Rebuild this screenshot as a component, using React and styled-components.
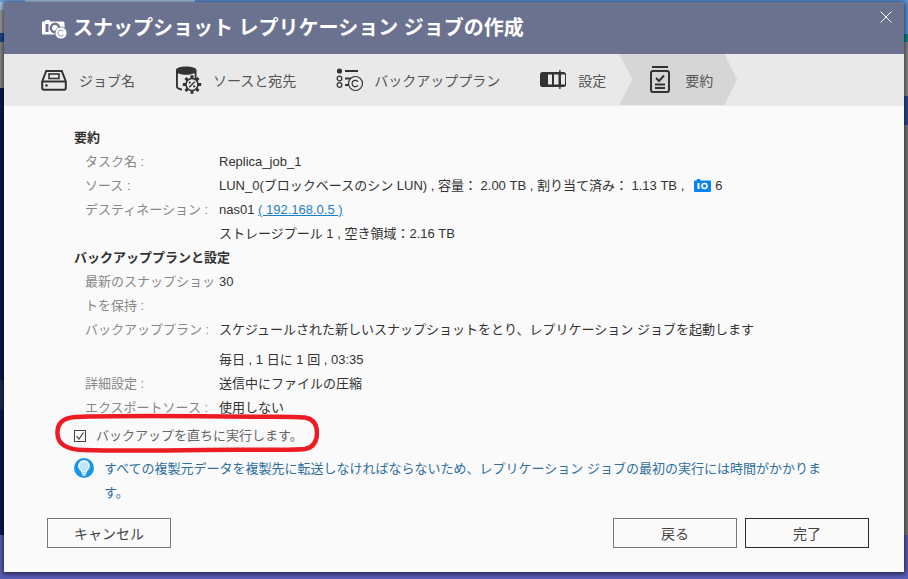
import React from "react";
import styled, { createGlobalStyle } from "styled-components";

const Global = createGlobalStyle`
  html, body { margin: 0; padding: 0; background: #5a5fb8; }
  body { font-family: "Liberation Sans", "Noto Sans CJK JP", sans-serif; }
  * { box-sizing: border-box; }
`;

const Desktop = styled.div`
  width: 908px;
  height: 579px;
  padding: 2px 4px 7px;
  overflow: hidden;
  background:
    linear-gradient(to right, #6fa0e0 0 25px, #aac6ee 25px 195px, #5b94dd 195px) 0 0 / 100% 2px no-repeat,
    linear-gradient(to bottom, #a9c4e8 0 10px, #9a9a9a 10px 33px, #1a4a90 33px 42px, #8a8a8a 42px 88px, #0a1a50 88px 380px, #1c2a50 380px 410px, #0a1a50 410px 535px, #5a5fb8 535px) 0 0 / 4px 100% no-repeat,
    linear-gradient(to bottom, #5b94dd 0 34px, #0a8a8a 34px 42px, #8a8a8a 42px 96px, #2a4a90 96px 125px, #7a7a7a 125px 535px, #5a5fb8 535px) 100% 0 / 4px 100% no-repeat,
    #5a5fb8;
`;

const Dialog = styled.div`
  width: 900px;
  height: 570px;
  display: flex;
  flex-direction: column;
  background: #fafafa;
  box-shadow: 0 1px 5px 1px rgba(0, 0, 0, 0.65);
`;

const Header = styled.header`
  height: 52px;
  flex: none;
  display: flex;
  align-items: center;
  padding: 0 11px 0 37px;
  gap: 4px;
  background: #6b7290;
  color: #fff;
`;

const Title = styled.h1`
  margin: 0;
  font-size: 20px;
  font-weight: 700;
  line-height: 52px;
  white-space: nowrap;
`;

const Close = styled.button`
  margin-left: auto;
  align-self: flex-start;
  margin-top: 8px;
  padding: 0;
  width: 14px;
  height: 14px;
  display: flex;
  border: 0;
  background: none;
  color: #fff;
`;

const StepBar = styled.nav`
  height: 52px;
  flex: none;
  display: flex;
  align-items: center;
  padding-left: 37px;
  background: #e9e9e9;
`;

const Step = styled.div`
  display: flex;
  align-items: center;
  height: 51px;
  margin-bottom: 1px;
  margin-right: 40px;
  color: #555;
  font-size: 14px;
  white-space: nowrap;
`;

const ActiveStep = styled(Step)`
  margin-left: -27px;
  margin-right: 0;
  padding: 0 24px 0 31px;
  background: #d6d6d6;
  clip-path: polygon(0 0, 105px 0, 100% 50%, 105px 100%, 0 100%, 13px 50%);
`;

const StepIcon = styled.span`
  width: ${(p) => p.$w || 38}px;
  flex: none;
  display: flex;
  align-items: center;
`;

const Body = styled.main`
  flex: 1;
  padding: 20px 69px 0 70px;
  font-size: 13px;
  line-height: 24px;
  color: #333;
`;

const Heading = styled.h2`
  margin: 0;
  font-size: 13px;
  font-weight: 700;
  line-height: 24px;
  color: #333;
`;

const Row = styled.div`
  display: grid;
  grid-template-columns: 134px 1fr;
  padding-left: 11px;
  margin-top: ${(p) => p.$top || 0}px;
`;

const Label = styled.div`
  color: #888;
  padding-right: 3px;
`;

const Value = styled.div`
  color: #333;
  white-space: nowrap;
`;

const Link = styled.a`
  color: #1a7fc9;
  text-decoration: underline;
`;

const SnapBadge = styled.span`
  display: inline-flex;
  vertical-align: -2px;
  margin: 0 4px 0 10px;
`;

const CheckRow = styled.label`
  position: relative;
  display: flex;
  align-items: center;
  gap: 10px;
  height: 24px;
  margin-top: 4px;
  color: #666;
`;

const CheckBox = styled.span`
  width: 12px;
  height: 12px;
  flex: none;
  display: flex;
  border: 1px solid #444;
`;

const Annotation = styled.span`
  position: absolute;
  left: -19px;
  top: -11px;
  display: block;
  pointer-events: none;
`;

const Info = styled.div`
  display: flex;
  gap: 10px;
  margin-top: 9px;
  color: #2f6f9f;
`;

const InfoIcon = styled.span`
  flex: none;
  height: 20px;
  margin-top: 1px;
  display: flex;
`;

const Footer = styled.footer`
  flex: none;
  display: flex;
  gap: 8px;
  padding: 0 35px 24px 43px;
`;

const Button = styled.button`
  width: 124px;
  height: 30px;
  padding: 0;
  font: inherit;
  font-size: 14px;
  color: #444;
  background: #fafafa;
  border: 1px solid ${(p) => (p.$primary ? "#2b2b2b" : "#777")};
  border-radius: 0;
  margin-left: ${(p) => (p.$push ? "auto" : 0)};
`;

const dark = "#333";

const SnapshotIcon = () => (
  <svg width="28" height="22" viewBox="0 0 28 22">
    <path d="M1 5.500a1 1 0 0 1 1-1h2l.6-1.500h4l.6 1.500H22a1.500 1.500 0 0 1 1.500 1.500V16a1.500 1.500 0 0 1-1.500 1.500H2a1 1 0 0 1-1-1z" fill="#fff" />
    <rect x="4.500" y="7" width="3" height="8" fill="#6b7290" />
    <circle cx="14" cy="11" r="4.200" fill="none" stroke="#6b7290" strokeWidth="2.400" />
    <circle cx="20" cy="16" r="6" fill="#fff" stroke="#6b7290" strokeWidth="0.800" />
    <path d="M22.200 14.400a2.800 2.800 0 1 0 0 3.200" fill="none" stroke="#a9aec2" strokeWidth="1.200" />
  </svg>
);

const CloseIcon = () => (
  <svg width="14" height="14" viewBox="0 0 14 14">
    <path d="M1.500 1.500l11 11M12.500 1.500l-11 11" stroke="#fff" strokeWidth="1" fill="none" />
  </svg>
);

const DriveIcon = () => (
  <svg width="26" height="22" viewBox="0 0 26 22" fill="none" stroke={dark} strokeWidth="2">
    <path d="M1.200 12.500L5.200 2h15.600l4 10.500V19a1.700 1.700 0 0 1-1.700 1.700H2.900A1.700 1.700 0 0 1 1.200 19z" />
    <path d="M1.500 12.500h23" />
    <rect x="8" y="5" width="10" height="4.500" strokeWidth="1.600" />
    <circle cx="5.500" cy="16.500" r="1.300" fill={dark} stroke="none" />
  </svg>
);

const SourceIcon = () => (
  <svg width="27" height="28" viewBox="0 0 27 28" fill="none">
    <path d="M1 4c0-2 4.500-3.500 10-3.500S21.500 2 21.500 4v9h-1.800V7.300c-2 .9-5.200 1.500-8.700 1.500S4.500 8.200 2.900 7.300V21c.8.700 2.300 1.300 4.100 1.600v1.800C3.500 24 1 22.500 1 20.500z" fill={dark} />
    <g transform="translate(17 18.500)">
      <path d="M0-9.200V-5.500M0 5.500V9.200M-9.200 0H-5.500M5.500 0H9.200M-6.500-6.500L-3.900-3.900M3.900 3.900L6.500 6.500M-6.500 6.500L-3.900 3.900M3.900-3.900L6.500-6.500" stroke={dark} strokeWidth="3" />
      <circle r="6" fill="#e9e9e9" stroke={dark} strokeWidth="1.600" />
      <path d="M-2.800 2.800L2.800-2.800" stroke={dark} strokeWidth="1.400" />
      <circle cx="-2.200" cy="-1.900" r="1.100" fill={dark} />
      <circle cx="2.200" cy="1.900" r="1.100" fill={dark} />
    </g>
  </svg>
);

const PlanIcon = () => (
  <svg width="28" height="24" viewBox="0 0 28 24" fill="none" stroke={dark}>
    <circle cx="3.500" cy="3" r="2.600" fill={dark} stroke="none" />
    <path d="M9 3h13" strokeWidth="2" />
    <circle cx="3.500" cy="10.500" r="2.300" strokeWidth="1.300" />
    <path d="M9 10.500h10" strokeWidth="2" />
    <circle cx="3.500" cy="17" r="2.300" strokeWidth="1.300" />
    <path d="M9 17h5" strokeWidth="2" />
    <circle cx="19.500" cy="15.500" r="7" fill="#e9e9e9" strokeWidth="1.200" />
    <path d="M22 13.800a3.200 3.200 0 1 0 0 3.400" strokeWidth="1.200" />
  </svg>
);

const SettingsIcon = () => (
  <svg width="26" height="20" viewBox="0 0 26 20">
    <rect x="0" y="2" width="26" height="15" rx="2.500" fill={dark} />
    <rect x="8" y="4.500" width="4" height="10" fill="#e9e9e9" />
    <rect x="14" y="4.500" width="4.500" height="10" fill="#e9e9e9" />
    <rect x="21" y="4.500" width="4" height="10" fill="#e9e9e9" />
    <rect x="19.200" y="0" width="1.400" height="19" fill={dark} />
  </svg>
);

const SummaryIcon = () => (
  <svg width="20" height="27" viewBox="0 0 20 27" fill="none" stroke={dark}>
    <path d="M2 1h16" strokeWidth="1.800" />
    <rect x="1" y="5" width="18" height="21" rx="2" strokeWidth="2" />
    <path d="M6 12l3 3 5-5.500" strokeWidth="2" />
    <path d="M5 18.500h10M5 22h10" strokeWidth="1.800" />
  </svg>
);

const BadgeIcon = () => (
  <svg width="17" height="13" viewBox="0 0 17 13">
    <path d="M0 2.500a1 1 0 0 1 1-1h1.500l.5-1.500h3l.5 1.500H16a1 1 0 0 1 1 1V12a1 1 0 0 1-1 1H1a1 1 0 0 1-1-1z" fill="#0a84f0" />
    <rect x="3.500" y="4" width="2" height="6" fill="#fff" />
    <circle cx="10.500" cy="7" r="2.500" fill="none" stroke="#fff" strokeWidth="1.600" />
  </svg>
);

const BulbIcon = () => (
  <svg width="20" height="20" viewBox="0 0 20 20">
    <circle cx="10" cy="10" r="10" fill="#1b95e8" />
    <path d="M10 2.800a5.200 5.200 0 0 0-3.200 9.300c.7.600.9 1.200.9 1.900h4.600c0-.7.200-1.300.9-1.900A5.200 5.200 0 0 0 10 2.800z" fill="#bfe3fa" stroke="#fff" strokeWidth="1.200" />
    <path d="M7.800 15.300h4.400M8.500 17h3" stroke="#fff" strokeWidth="1.300" />
  </svg>
);

const CheckMark = () => (
  <svg width="10" height="10" viewBox="0 0 10 10">
    <path d="M1.500 5l2.500 3 4.500-6.500" fill="none" stroke="#333" strokeWidth="1.100" />
  </svg>
);

const RedRing = () => (
  <svg width="264" height="41" viewBox="0 0 264 41" fill="none">
    <path
      d="M20 4C60 2.500 120 3 170 3.500S238 3 250 4.500c9 1.500 12 7 12 15.500s-3 14.500-12 16c-14 1.500-60 .5-100 1S60 38 28 37C13 36.500 3 32 2.500 21S8 5 20 4z"
      stroke="#ed1c24"
      strokeWidth="4.500"
    />
  </svg>
);

export default function App() {
  return (
    <Desktop lang="ja">
      <Global />
      <Dialog>
        <Header>
          <SnapshotIcon />
          <Title>スナップショット レプリケーション ジョブの作成</Title>
          <Close aria-label="close"><CloseIcon /></Close>
        </Header>
        <StepBar>
          <Step><StepIcon><DriveIcon /></StepIcon>ジョブ名</Step>
          <Step><StepIcon><SourceIcon /></StepIcon>ソースと宛先</Step>
          <Step><StepIcon><PlanIcon /></StepIcon>バックアッププラン</Step>
          <Step><StepIcon><SettingsIcon /></StepIcon>設定</Step>
          <ActiveStep><StepIcon $w={35}><SummaryIcon /></StepIcon>要約</ActiveStep>
        </StepBar>
        <Body>
          <Heading>要約</Heading>
          <Row><Label>タスク名 :</Label><Value>Replica_job_1</Value></Row>
          <Row><Label>ソース :</Label><Value>LUN_0(ブロックベースのシン LUN) , 容量： 2.00 TB , 割り当て済み： 1.13 TB ,<SnapBadge><BadgeIcon /></SnapBadge>6</Value></Row>
          <Row><Label>デスティネーション :</Label><Value>nas01 <Link>( 192.168.0.5 )</Link></Value></Row>
          <Row><Label /><Value>ストレージプール 1 , 空き領域：2.16 TB</Value></Row>
          <Heading>バックアッププランと設定</Heading>
          <Row><Label>最新のスナップショットを保持 :</Label><Value>30</Value></Row>
          <Row><Label>バックアッププラン :</Label><Value>スケジュールされた新しいスナップショットをとり、レプリケーション ジョブを起動します</Value></Row>
          <Row $top={6}><Label /><Value>毎日 , 1 日に 1 回 , 03:35</Value></Row>
          <Row><Label>詳細設定 :</Label><Value>送信中にファイルの圧縮</Value></Row>
          <Row><Label>エクスポートソース :</Label><Value>使用しない</Value></Row>
          <CheckRow>
            <CheckBox><CheckMark /></CheckBox>
            バックアップを直ちに実行します。
            <Annotation><RedRing /></Annotation>
          </CheckRow>
          <Info>
            <InfoIcon><BulbIcon /></InfoIcon>
            <div>すべての複製元データを複製先に転送しなければならないため、レプリケーション ジョブの最初の実行には時間がかかります。</div>
          </Info>
        </Body>
        <Footer>
          <Button>キャンセル</Button>
          <Button $push>戻る</Button>
          <Button $primary>完了</Button>
        </Footer>
      </Dialog>
    </Desktop>
  );
}
